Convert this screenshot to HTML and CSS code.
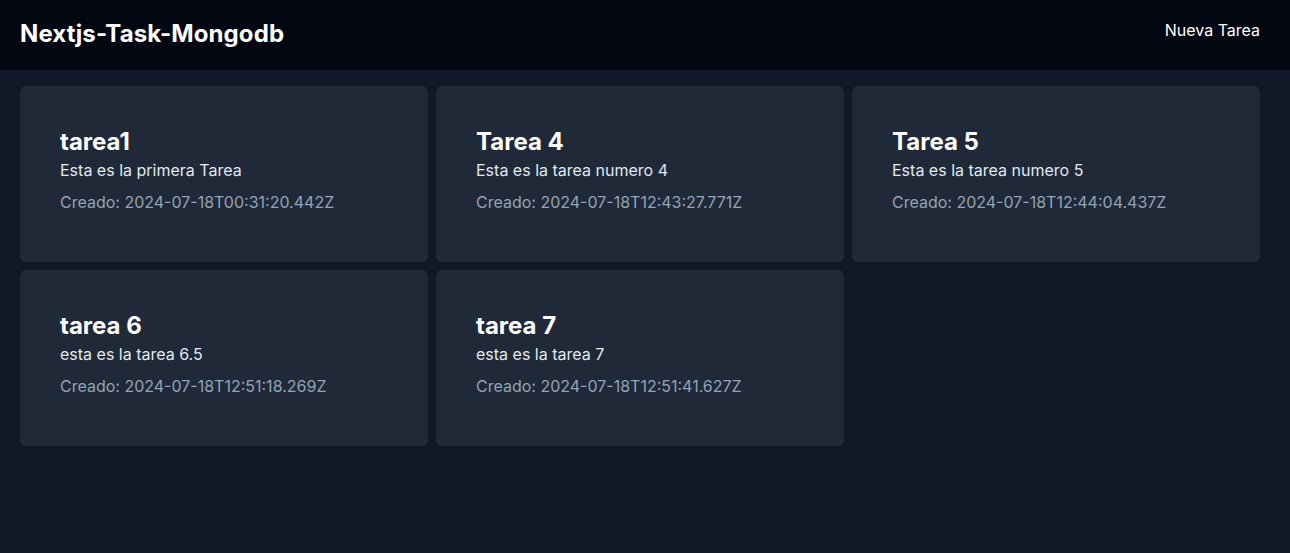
FILE: index.html
```html
<!DOCTYPE html>
<html lang="es">
<head>
<meta charset="utf-8">
<title>Nextjs-Task-Mongodb</title>
<link rel="stylesheet" href="styles.css">
</head>
<body>
<nav class="navbar">
  <a class="brand" href="#">Nextjs-Task-Mongodb</a>
  <a class="nav-link" href="#">Nueva Tarea</a>
</nav>
<main class="grid">
  <div class="card">
    <h3 class="card-title">tarea1</h3>
    <p class="card-desc">Esta es la primera Tarea</p>
    <p class="card-date">Creado: 2024-07-18T00:31:20.442Z</p>
  </div>
  <div class="card">
    <h3 class="card-title">Tarea 4</h3>
    <p class="card-desc">Esta es la tarea numero 4</p>
    <p class="card-date">Creado: 2024-07-18T12:43:27.771Z</p>
  </div>
  <div class="card">
    <h3 class="card-title">Tarea 5</h3>
    <p class="card-desc">Esta es la tarea numero 5</p>
    <p class="card-date">Creado: 2024-07-18T12:44:04.437Z</p>
  </div>
  <div class="card">
    <h3 class="card-title">tarea 6</h3>
    <p class="card-desc">esta es la tarea 6.5</p>
    <p class="card-date">Creado: 2024-07-18T12:51:18.269Z</p>
  </div>
  <div class="card">
    <h3 class="card-title">tarea 7</h3>
    <p class="card-desc">esta es la tarea 7</p>
    <p class="card-date">Creado: 2024-07-18T12:51:41.627Z</p>
  </div>
</main>
</body>
</html>
```
FILE: styles.css
```css
* { box-sizing: border-box; }
html, body {
  margin: 0;
  padding: 0;
  height: 100%;
}
body {
  background: #111827;
  color: #ffffff;
  font-family: Inter, "Noto Sans", sans-serif;
}
a { color: inherit; text-decoration: none; }
.navbar {
  display: flex;
  justify-content: space-between;
  align-items: flex-start;
  background: #030712;
  padding: 18px 30px 20px 20px;
  height: 70px;
}
.brand {
  font-size: 24px;
  line-height: 32px;
  font-weight: 700;
  letter-spacing: 0.1px;
}
.nav-link {
  font-size: 16px;
  line-height: 24px;
}
.grid {
  display: grid;
  grid-template-columns: repeat(3, 1fr);
  gap: 8px;
  padding: 16px 30px 0 20px;
}
.card {
  background: #1f2937;
  border-radius: 6px;
  padding: 40px 40px 48px;
  height: 176px;
}
.card-title {
  margin: 0;
  font-size: 24px;
  line-height: 32px;
  font-weight: 700;
  color: #ffffff;
}
.card-desc {
  margin: 0;
  font-size: 16px;
  line-height: 24px;
  color: #e2e8f0;
}
.card-date {
  margin: 8px 0 0;
  font-size: 16px;
  line-height: 24px;
  color: #94a3b8;
}
```
